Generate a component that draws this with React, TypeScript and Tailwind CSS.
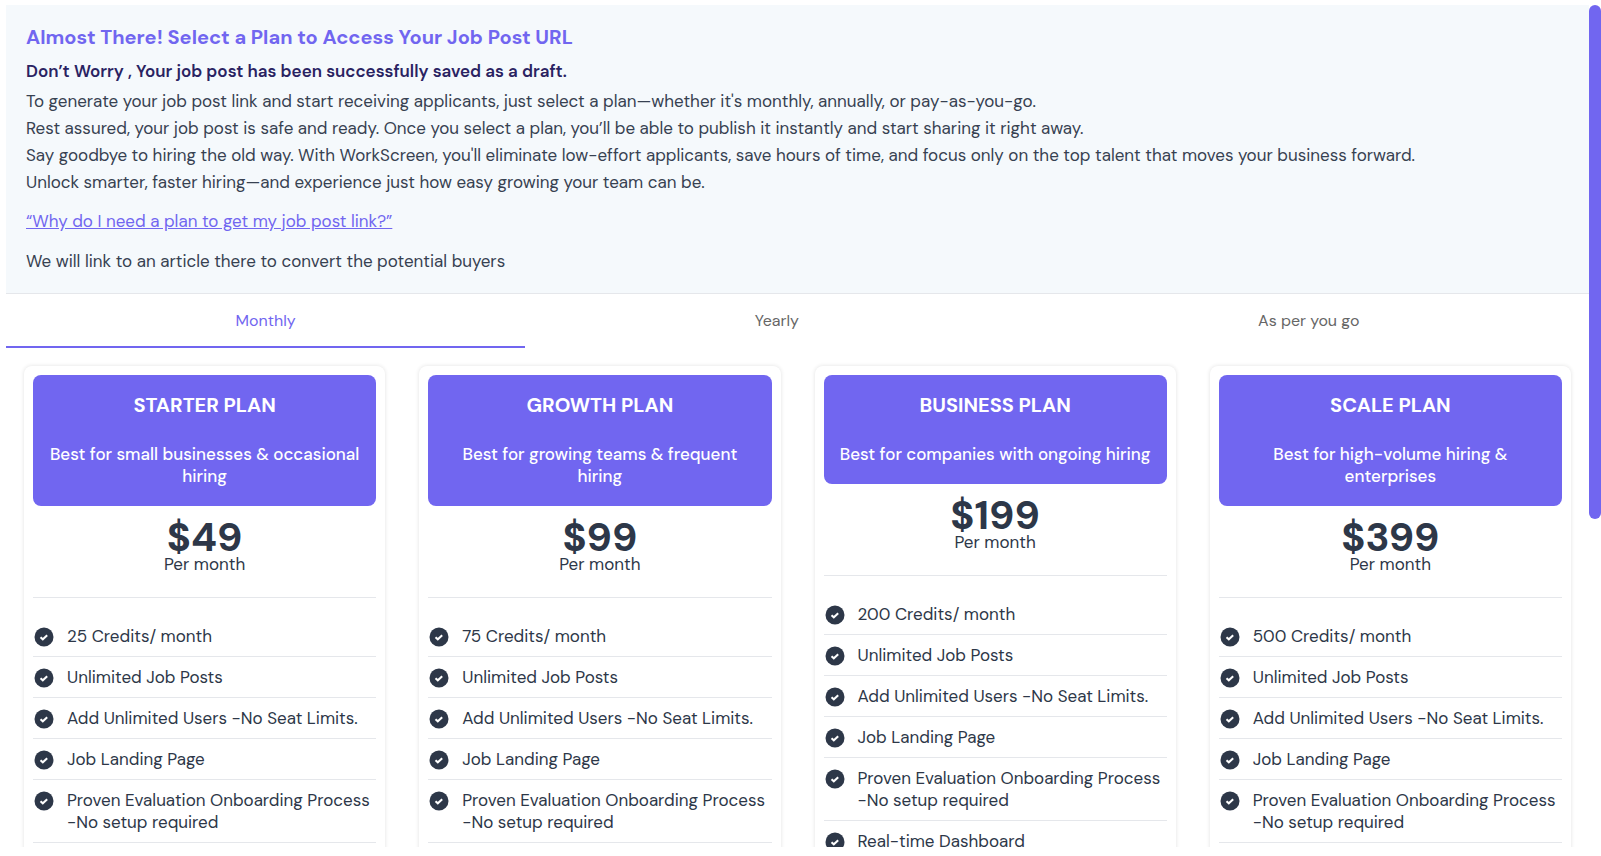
import { useState } from "react";

interface Plan {
  name: string;
  description: string;
  price: string;
  credits: number;
}

const plans: Plan[] = [
  { name: "STARTER PLAN", description: "Best for small businesses & occasional hiring", price: "$49", credits: 25 },
  { name: "GROWTH PLAN", description: "Best for growing teams & frequent hiring", price: "$99", credits: 75 },
  { name: "BUSINESS PLAN", description: "Best for companies with ongoing hiring", price: "$199", credits: 200 },
  { name: "SCALE PLAN", description: "Best for high-volume hiring & enterprises", price: "$399", credits: 500 },
];

const sharedFeatures = [
  "Unlimited Job Posts",
  "Add Unlimited Users -No Seat Limits.",
  "Job Landing Page",
  "Proven Evaluation Onboarding Process -No setup required",
  "Real-time Dashboard",
];

const tabs = ["Monthly", "Yearly", "As per you go"];

function CheckIcon() {
  return (
    <svg viewBox="0 0 20 20" className="mt-[2px] h-5 w-5 shrink-0" aria-hidden="true">
      <circle cx="10" cy="10" r="9.5" fill="#2d3748" />
      <path d="M6.5 10.2 8.8 12.3l4.4-4.1" fill="none" stroke="#fff" strokeWidth="2" />
    </svg>
  );
}

function PlanCard({ plan }: { plan: Plan }) {
  return (
    <article className="rounded-lg bg-white p-[9px] shadow-[0_0_4px_rgba(0,0,0,0.12)]">
      <header className="rounded-lg bg-[#7166f0] px-[14px] pt-4 pb-[19px] text-center text-white">
        <h2 className="text-[20px] leading-7 font-bold">{plan.name}</h2>
        <p className="mt-6 text-[17px] leading-[22px] font-medium">{plan.description}</p>
      </header>
      <div className="mt-[15px] border-b border-gray-200 pb-[22px] text-center">
        <p className="text-[40px] leading-8 font-bold">{plan.price}</p>
        <p className="text-[17px] leading-[22px]">Per month</p>
      </div>
      <ul className="mt-[18px]">
        {[`${plan.credits} Credits/ month`, ...sharedFeatures].map((feature) => (
          <li key={feature} className="flex gap-[13px] border-b border-gray-200 py-[9px] pl-px text-[17px] leading-[22px]">
            <CheckIcon />
            <span>{feature}</span>
          </li>
        ))}
      </ul>
    </article>
  );
}

export default function App() {
  const [activeTab, setActiveTab] = useState("Monthly");

  return (
    <div className="flex h-screen bg-white pt-[5px] pb-[9px] pl-[6px] font-['DM_Sans','Open_Sans',sans-serif] text-[#2d3748]">
      <main className="min-w-0 flex-1 overflow-y-auto [scrollbar-width:none]">
        <section className="border-b border-gray-200 bg-[#f5f9fc] px-5 pt-4 pb-[18px] text-[17px] leading-[27px] text-[#374151]">
          <h1 className="text-[20px] leading-8 font-bold text-[#7166f0]">
            Almost There! Select a Plan to Access Your Job Post URL
          </h1>
          <p className="mt-[5px] font-semibold text-[#2a2362]">
            Don’t Worry , Your job post has been successfully saved as a draft.
          </p>
          <div className="mt-[3px]">
            <p>To generate your job post link and start receiving applicants, just select a plan—whether it's monthly, annually, or pay-as-you-go.</p>
            <p>Rest assured, your job post is safe and ready. Once you select a plan, you’ll be able to publish it instantly and start sharing it right away.</p>
            <p>Say goodbye to hiring the old way. With WorkScreen, you'll eliminate low-effort applicants, save hours of time, and focus only on the top talent that moves your business forward.</p>
            <p>Unlock smarter, faster hiring—and experience just how easy growing your team can be.</p>
          </div>
          <p className="mt-3">
            <a href="#why-a-plan" className="text-[#7166f0] underline">“Why do I need a plan to get my job post link?”</a>
          </p>
          <p className="mt-[13px]">We will link to an article there to convert the potential buyers</p>
        </section>

        <div role="tablist" className="flex">
          {tabs.map((tab) => (
            <button
              key={tab}
              role="tab"
              aria-selected={tab === activeTab}
              onClick={() => setActiveTab(tab)}
              className={`flex-auto border-b-2 pt-4 pb-[14px] text-[16px] leading-[22px] ${
                tab === activeTab ? "border-[#7166f0] text-[#7166f0]" : "border-transparent text-[#666666]"
              }`}
            >
              {tab}
            </button>
          ))}
        </div>

        <div className="grid grid-cols-4 items-start gap-[34px] px-[18px] pt-[18px] pb-6">
          {plans.map((plan) => (
            <PlanCard key={plan.name} plan={plan} />
          ))}
        </div>
      </main>
      <div className="w-3 shrink-0">
        <div className="h-[61%] rounded-full bg-[#7166f0]" />
      </div>
    </div>
  );
}
